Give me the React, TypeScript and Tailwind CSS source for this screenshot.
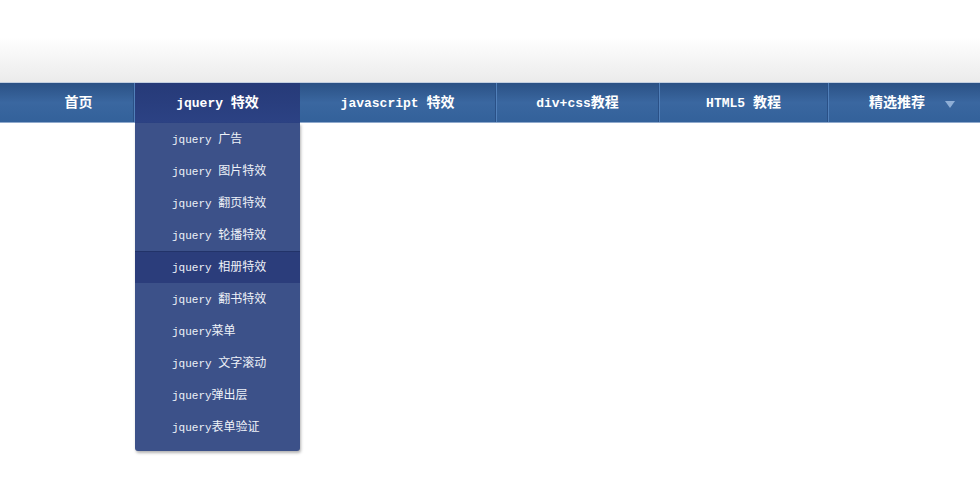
import React from "react";

const navItems = [
  { label: "首页", width: "w-[111px]" },
  { label: "jquery 特效", width: "w-[165px]", active: true },
  { label: "javascript 特效", width: "w-[197px]" },
  { label: "div+css教程", width: "w-[163px]" },
  { label: "HTML5 教程", width: "w-[169px]" },
];

const subItems = [
  "jquery 广告",
  "jquery 图片特效",
  "jquery 翻页特效",
  "jquery 轮播特效",
  "jquery 相册特效",
  "jquery 翻书特效",
  "jquery菜单",
  "jquery 文字滚动",
  "jquery弹出层",
  "jquery表单验证",
];

// latin in a narrow mono face, CJK a bit larger (like SimSun on the original)
function Mixed({ text, cjk }: { text: string; cjk: string }) {
  const parts = text.split(/([\u4e00-\u9fff]+)/).filter(Boolean);
  return (
    <span className="whitespace-pre">
      {parts.map((p, i) =>
        /[\u4e00-\u9fff]/.test(p) ? (
          <span key={i} className={cjk}>
            {p}
          </span>
        ) : (
          <span key={i}>{p}</span>
        )
      )}
    </span>
  );
}

export default function App() {
  return (
    <div
      className="w-[980px] h-[484px] bg-white overflow-hidden"
      style={{ fontFamily: '"Liberation Mono", "Noto Sans CJK SC", monospace' }}
    >
      {/* top fade */}
      <div className="h-[82px] bg-linear-to-b from-white from-45% to-[#ebebeb]" />
      <div className="h-px bg-[#c3cfe0]" />

      {/* nav bar */}
      <div className="relative h-[40px] bg-linear-to-b from-[#2b5185] via-[#3a67a0] to-[#33619a] border-b border-[#8fa9cc]">
        <div className="flex h-full pl-[24px] whitespace-nowrap">
          {navItems.map((it) => (
            <div key={it.label} className={`relative ${it.width} h-full flex`}>
              <div
                className={`flex-1 flex items-center justify-center pt-px text-white font-bold text-[13px] ${
                  it.active ? "bg-linear-to-b from-[#263a78] to-[#2c4284] -mb-px" : ""
                }`}
              >
                <Mixed text={it.label} cjk="text-[14px]" />
              </div>
              {!it.active && (
                <div className="flex h-full">
                  <div className="w-px bg-[#2a5086]" />
                  <div className="w-px bg-[#5180ba]" />
                </div>
              )}

              {it.active && (
                <div className="absolute left-0 top-[40px] w-[165px] pb-2 bg-[#3c5189] rounded-b-[3px] shadow-[1px_2px_3px_rgba(0,0,0,0.3)] z-10">
                  {subItems.map((s) => {
                    const hl = s === "jquery 相册特效";
                    return (
                      <div
                        key={s}
                        className={`h-8 flex items-center pl-[37px] pt-px text-[11px] text-[#eef1f8] ${
                          hl ? "bg-[#2b3d7b] border-t border-[#223369]" : ""
                        }`}
                      >
                        <Mixed text={s} cjk="text-[12px]" />
                      </div>
                    );
                  })}
                </div>
              )}
            </div>
          ))}

          <div className="h-full flex items-center pl-[40px] pt-px text-white font-bold">
            <span className="text-[14px]">精选推荐</span>
            <svg width="10" height="7" viewBox="0 0 10 7" className="ml-[20px] mt-[2px]">
              <path d="M0 0 H10 L5 7 Z" fill="#8eaed6" />
            </svg>
          </div>
        </div>
      </div>
    </div>
  );
}
